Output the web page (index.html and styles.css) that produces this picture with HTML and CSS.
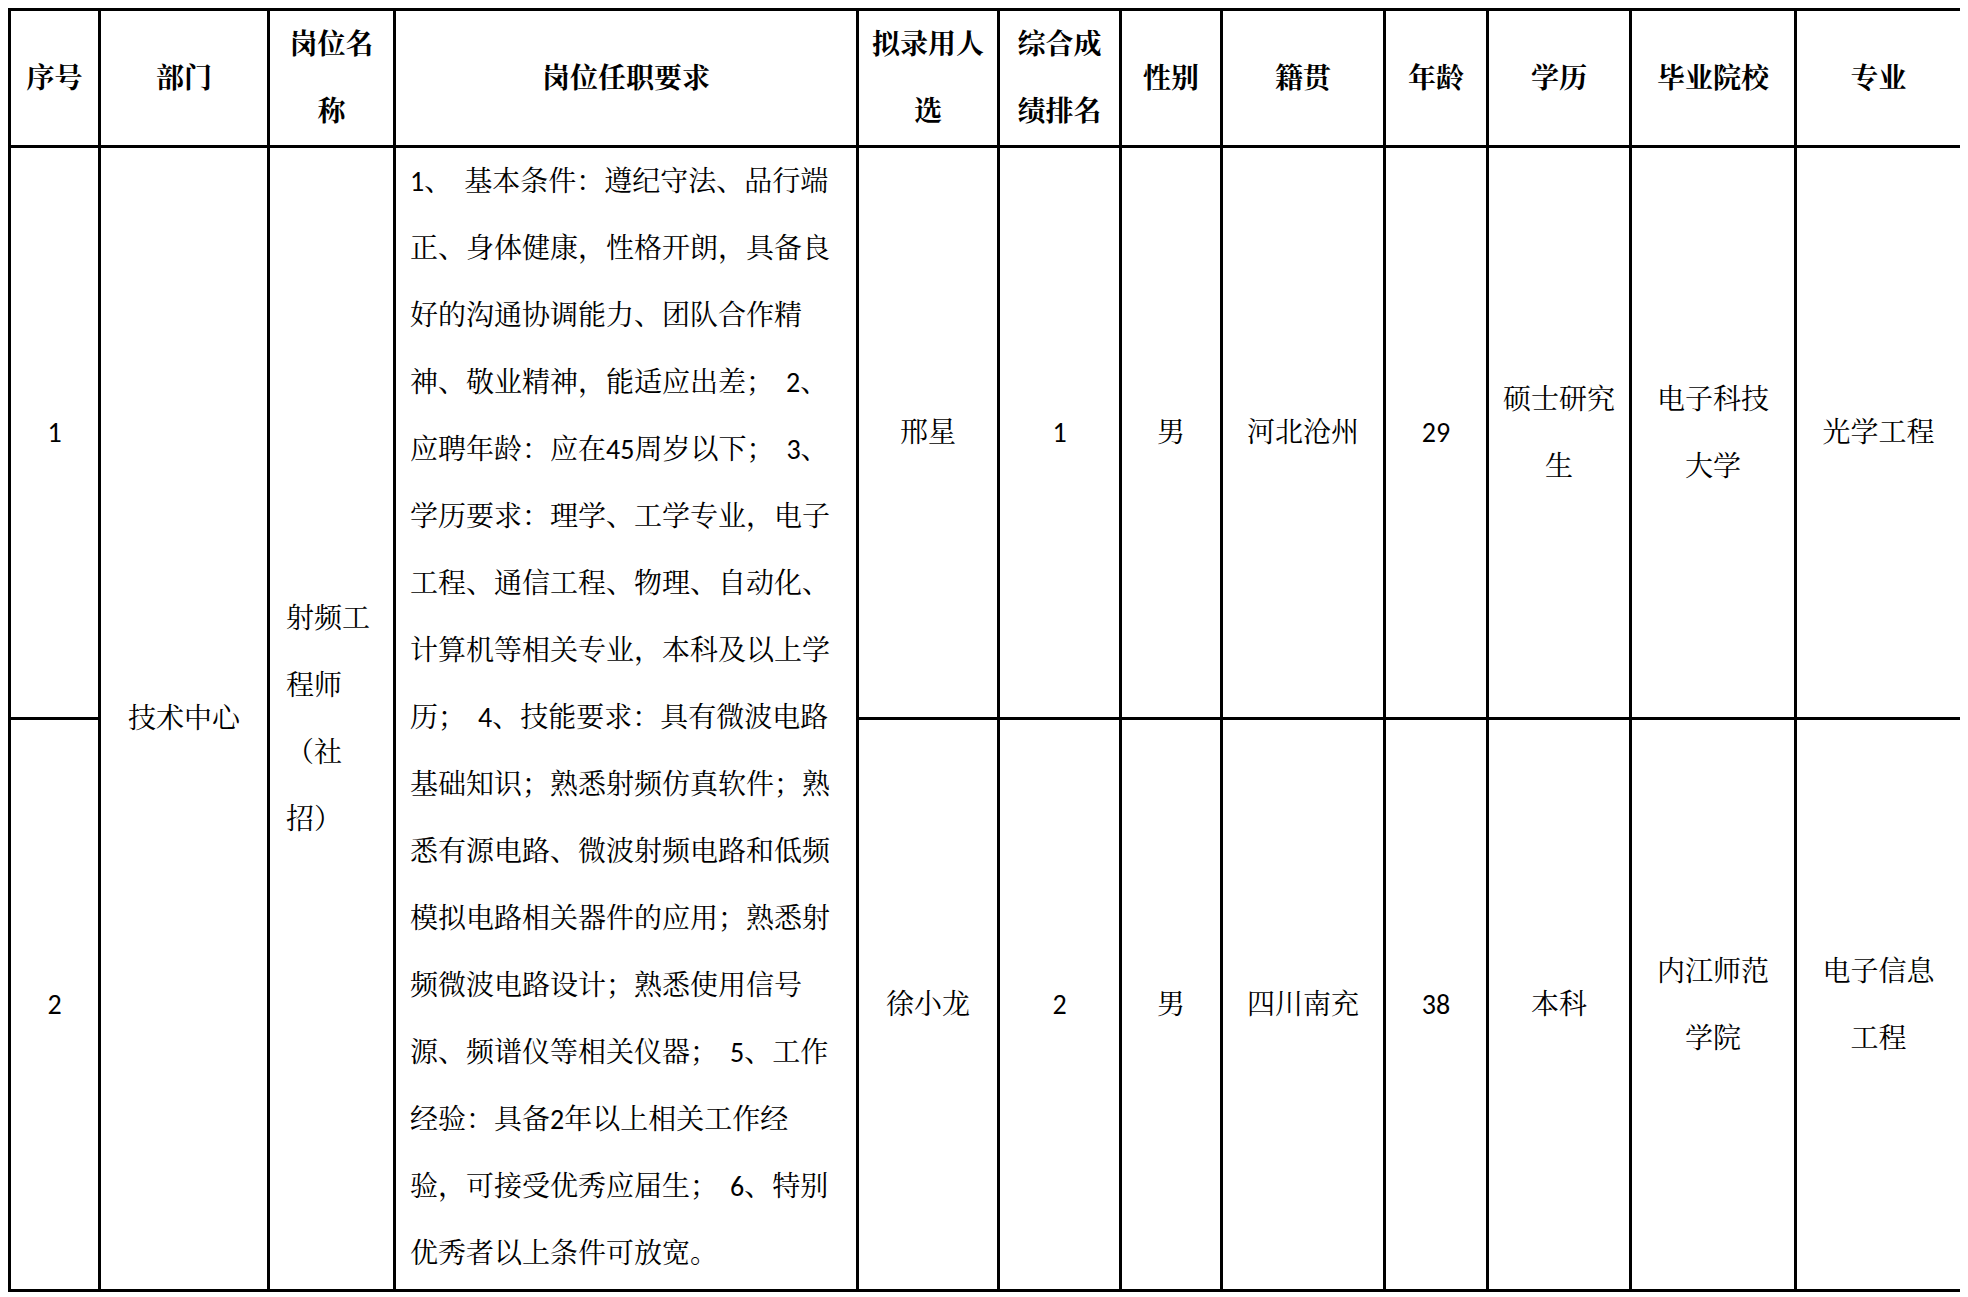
FILE: index.html
```html
<!DOCTYPE html>
<html lang="zh-CN">
<head>
<meta charset="utf-8">
<title>拟录用人选</title>
<link rel="stylesheet" href="styles.css">
</head>
<body>
<table class="roster">
  <colgroup>
    <col class="c-no"><col class="c-dept"><col class="c-post"><col class="c-req"><col class="c-name"><col class="c-rank"><col class="c-sex"><col class="c-home"><col class="c-age"><col class="c-edu"><col class="c-school"><col class="c-major">
  </colgroup>
  <thead>
    <tr class="head">
      <th>序号</th>
      <th>部门</th>
      <th>岗位名<br>称</th>
      <th>岗位任职要求</th>
      <th>拟录用人<br>选</th>
      <th>综合成<br>绩排名</th>
      <th>性别</th>
      <th>籍贯</th>
      <th>年龄</th>
      <th>学历</th>
      <th>毕业院校</th>
      <th>专业</th>
    </tr>
  </thead>
  <tbody>
    <tr class="row">
      <td>1</td>
      <td rowspan="2">技术中心</td>
      <td rowspan="2" class="left">射频工<br>程师<br>（社<br>招）</td>
      <td rowspan="2" class="desc">1、<span class="sp"></span>基本条件：遵纪守法、品行端<br>正、身体健康，性格开朗，具备良<br>好的沟通协调能力、团队合作精<br>神、敬业精神，能适应出差；<span class="sp"></span>2、<br>应聘年龄：应在45周岁以下；<span class="sp"></span>3、<br>学历要求：理学、工学专业，电子<br>工程、通信工程、物理、自动化、<br>计算机等相关专业，本科及以上学<br>历；<span class="sp"></span>4、技能要求：具有微波电路<br>基础知识；熟悉射频仿真软件；熟<br>悉有源电路、微波射频电路和低频<br>模拟电路相关器件的应用；熟悉射<br>频微波电路设计；熟悉使用信号<br>源、频谱仪等相关仪器；<span class="sp"></span>5、工作<br>经验：具备2年以上相关工作经<br>验，可接受优秀应届生；<span class="sp"></span>6、特别<br>优秀者以上条件可放宽。</td>
      <td>邢星</td>
      <td>1</td>
      <td>男</td>
      <td>河北沧州</td>
      <td>29</td>
      <td>硕士研究<br>生</td>
      <td>电子科技<br>大学</td>
      <td>光学工程</td>
    </tr>
    <tr class="row">
      <td>2</td>
      <td>徐小龙</td>
      <td>2</td>
      <td>男</td>
      <td>四川南充</td>
      <td>38</td>
      <td>本科</td>
      <td>内江师范<br>学院</td>
      <td>电子信息<br>工程</td>
    </tr>
  </tbody>
</table>
</body>
</html>
```

FILE: styles.css
```css
html, body {
  background: #fff;
}

body {
  margin: 8px;
  color: #000;
  font-family: Carlito, Lato, "Noto Serif CJK SC", "Noto Sans CJK SC", sans-serif;
  font-size: 28px;
}

.roster {
  border-collapse: collapse;
  table-layout: fixed;
  width: 1955px;
}

.c-no { width: 90px; }
.c-dept { width: 169px; }
.c-post { width: 126px; }
.c-req { width: 463px; }
.c-name { width: 141px; }
.c-rank { width: 122px; }
.c-sex { width: 101px; }
.c-home { width: 163px; }
.c-age { width: 103px; }
.c-edu { width: 143px; }
.c-school { width: 165px; }
.c-major { width: 166px; }

.roster th,
.roster td {
  border: 3px solid #000;
  padding: 0;
  text-align: center;
  vertical-align: middle;
  line-height: 67px;
  font-size: 28px;
  white-space: nowrap;
}

.roster th {
  font-weight: 700;
}

.head {
  height: 136px;
}

.row {
  height: 572px;
}

.roster td.left {
  text-align: left;
  padding-left: 16px;
}

.roster td.desc {
  text-align: left;
  vertical-align: top;
  padding: 0 0 0 14px;
}

.sp {
  display: inline-block;
  width: 12px;
}
```
